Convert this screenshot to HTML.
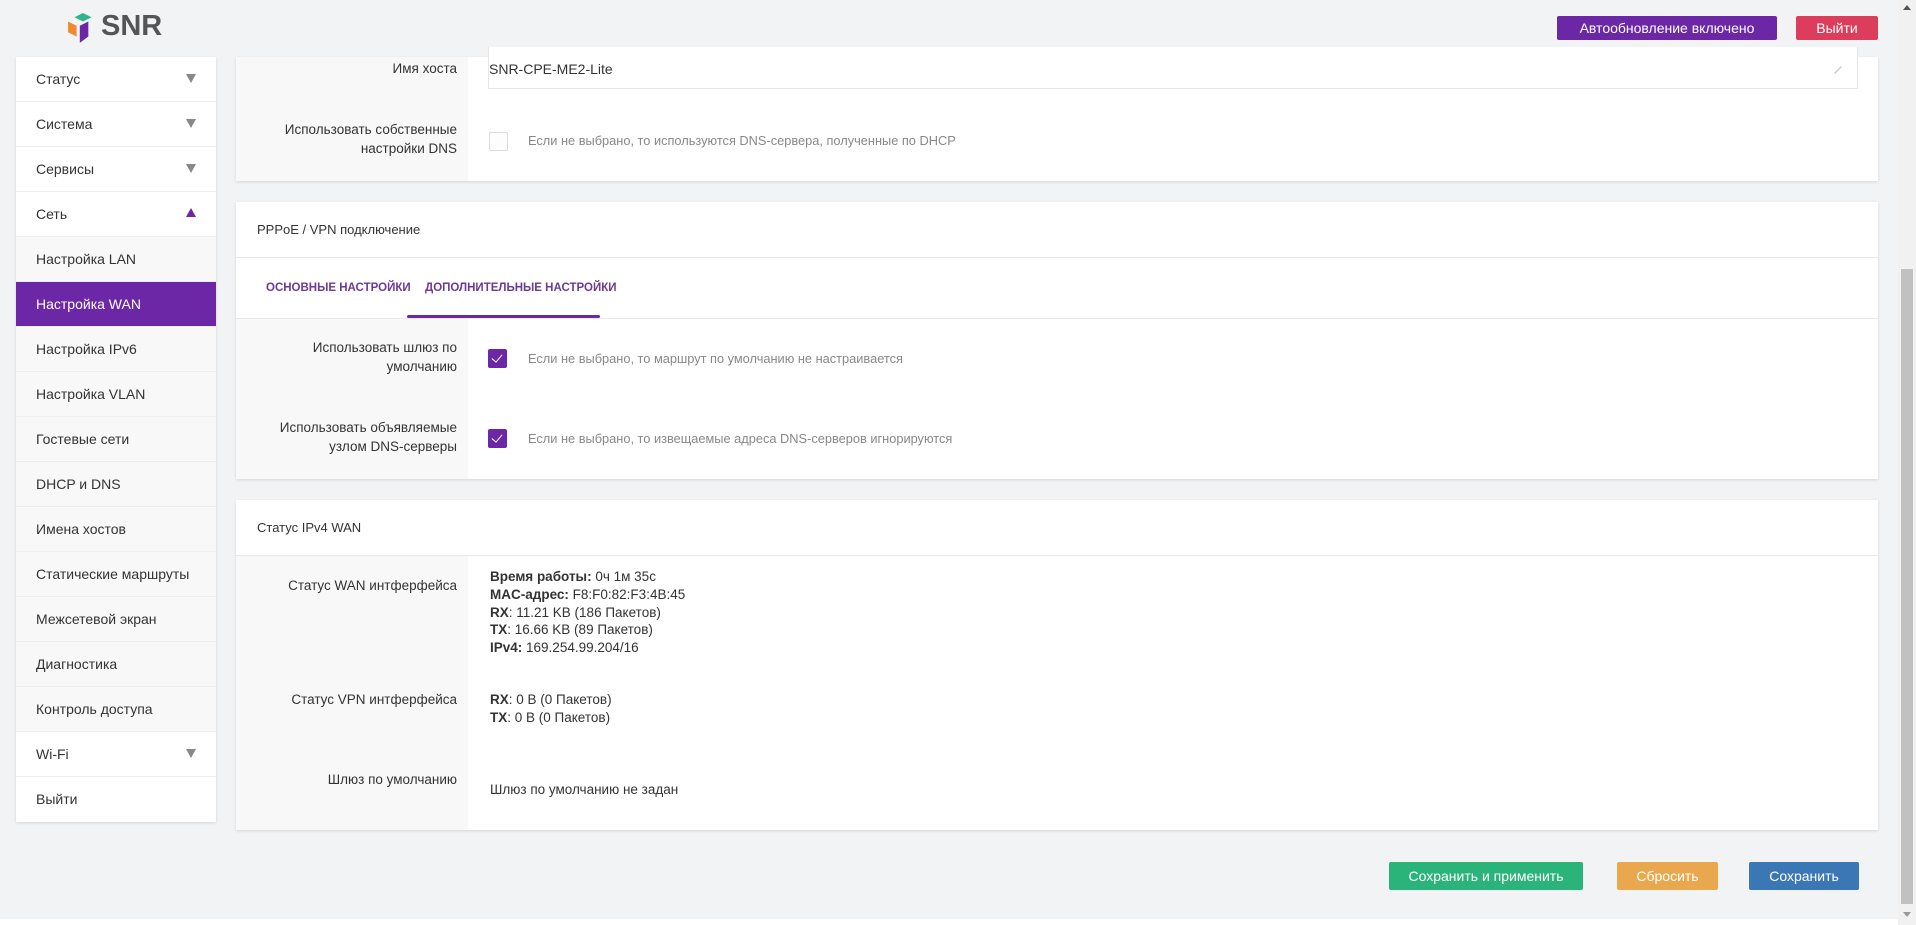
<!DOCTYPE html>
<html><head><meta charset="utf-8"><style>
*{box-sizing:border-box;margin:0;padding:0}
body{width:1916px;height:925px;background:#fff;font-family:"Liberation Sans",sans-serif;color:#333;position:relative;overflow:hidden}
.bg{position:absolute;left:0;top:0;width:1898px;height:919px;background:#f2f3f5}
.a{position:absolute}
.side{position:absolute;left:16px;top:57px;width:200px;background:#fff;box-shadow:0 1px 3px rgba(0,0,0,.12)}
.side div{height:45px;line-height:45px;padding-left:20px;font-size:14px;color:#333;border-bottom:1px solid #eceef0;position:relative;background:#f8f8f8}
.side div.w{background:#fff}
.side div.act{background:#6b27a6;color:#fff}
.tri{position:absolute;right:20px;top:17px;width:0;height:0;border-left:5px solid transparent;border-right:5px solid transparent;border-top:9px solid #888}
.up{border-top:none;border-bottom:9px solid #6b27a6;top:16px}
.card{position:absolute;left:236px;width:1642px;background:#fff;box-shadow:0 1px 3px rgba(0,0,0,.12)}
.lab{position:absolute;left:0;width:232px;background:#f8f8f8}
.lt{position:absolute;right:1421px;text-align:right;font-size:13.5px;line-height:19px;color:#333}
.hd{position:absolute;left:21px;font-size:13px;color:#333}
.hr{position:absolute;left:0;width:1642px;height:1px;background:#e8e9eb}
.cb{position:absolute;width:19px;height:19px;border-radius:2px;background:#6b27a6}
.cb:after{content:"";position:absolute;left:6px;top:3px;width:5px;height:9px;border-right:1.5px solid #fff;border-bottom:1.5px solid #fff;transform:rotate(40deg)}
.help{position:absolute;font-size:12.8px;color:#888}
.v{font-size:13.5px;line-height:17.8px;color:#333}
.btn{position:absolute;color:#fff;font-size:14px;text-align:center;border-radius:2px}
</style></head><body>
<div class="bg"></div>
<!-- logo -->
<svg class="a" style="left:68px;top:13px" width="30" height="32" viewBox="0 0 28 30">
<polygon points="14,0 22,4 14,8 6,4" fill="#2fb58b"/>
<polygon points="0,8 8,12 8,22 0,18" fill="#f08a2e"/>
<polygon points="11,12 19,8 19,22 11,28" fill="#6b27a6"/>
</svg>
<div class="a" style="left:101px;top:10px;font-size:29px;font-weight:bold;color:#555">SNR</div>
<div class="btn" style="left:1557px;top:16px;width:220px;height:24px;line-height:24px;background:#6b27a6">Автообновление включено</div>
<div class="btn" style="left:1796px;top:16px;width:82px;height:24px;line-height:24px;background:#dc3d5d">Выйти</div>
<!-- scrollbar -->
<div class="a" style="left:1898px;top:0;width:18px;height:925px;background:#f1f1f1"></div>
<div class="a" style="left:1901px;top:269px;width:12px;height:635px;background:#c1c1c1"></div>
<div class="a" style="left:1903px;top:5px;border-left:4px solid transparent;border-right:4px solid transparent;border-bottom:5px solid #555"></div>
<div class="a" style="left:1903px;top:912px;border-left:4px solid transparent;border-right:4px solid transparent;border-top:5px solid #999"></div>
<!-- sidebar -->
<div class="side">
<div class="w">Статус<span class="tri"></span></div>
<div class="w">Система<span class="tri"></span></div>
<div class="w">Сервисы<span class="tri"></span></div>
<div class="w">Сеть<span class="tri up"></span></div>
<div>Настройка LAN</div>
<div class="act">Настройка WAN</div>
<div>Настройка IPv6</div>
<div>Настройка VLAN</div>
<div>Гостевые сети</div>
<div>DHCP и DNS</div>
<div>Имена хостов</div>
<div>Статические маршруты</div>
<div>Межсетевой экран</div>
<div>Диагностика</div>
<div>Контроль доступа</div>
<div class="w">Wi-Fi<span class="tri"></span></div>
<div class="w" style="border-bottom:none">Выйти</div>
</div>
<!-- card1 -->
<div class="card" style="top:57px;height:124px">
<div class="lab" style="top:0;height:124px"></div>
<div class="lt" style="top:2px">Имя хоста</div>
<div class="a" style="left:252px;top:-10px;width:1370px;height:42px;border:1px solid #e6e6e6;border-top:none;background:#fff"></div>
<div class="a v" style="left:253px;top:4px;font-size:14px">SNR-CPE-ME2-Lite</div>
<svg class="a" style="left:1596px;top:6px" width="12" height="12" viewBox="0 0 12 12"><path d="M2 10 L9 3 L10 4 L3 11 Z" fill="#ccc"/></svg>
<div class="lt" style="top:63px">Использовать собственные<br>настройки DNS</div>
<div class="a" style="left:253px;top:75px;width:19px;height:19px;border:1px solid #ddd;border-radius:2px;background:#fdfdfd"></div>
<div class="help" style="left:292px;top:76px">Если не выбрано, то используются DNS-сервера, полученные по DHCP</div>
</div>
<!-- card2 -->
<div class="card" style="top:202px;height:277px">
<div class="hd" style="top:20px">PPPoE / VPN подключение</div>
<div class="hr" style="top:55px"></div>
<div class="a" style="left:30px;top:80px;font-size:11.5px;font-weight:bold;color:#6b3a95">ОСНОВНЫЕ НАСТРОЙКИ</div>
<div class="a" style="left:189px;top:80px;font-size:11.5px;font-weight:bold;color:#6b3a95">ДОПОЛНИТЕЛЬНЫЕ НАСТРОЙКИ</div>
<div class="a" style="left:171px;top:113px;width:193px;height:3px;background:#6b27a6;border-radius:2px"></div>
<div class="hr" style="top:116px"></div>
<div class="lab" style="top:117px;height:160px"></div>
<div class="lt" style="top:136px">Использовать шлюз по<br>умолчанию</div>
<div class="cb" style="left:252px;top:147px"></div>
<div class="help" style="left:292px;top:149px">Если не выбрано, то маршрут по умолчанию не настраивается</div>
<div class="lt" style="top:216px">Использовать объявляемые<br>узлом DNS-серверы</div>
<div class="cb" style="left:252px;top:227px"></div>
<div class="help" style="left:292px;top:229px">Если не выбрано, то извещаемые адреса DNS-серверов игнорируются</div>
</div>
<!-- card3 -->
<div class="card" style="top:500px;height:330px">
<div class="hd" style="top:20px">Статус IPv4 WAN</div>
<div class="hr" style="top:55px"></div>
<div class="lab" style="top:56px;height:274px"></div>
<div class="lt" style="top:76px">Статус WAN интферфейса</div>
<div class="a v" style="left:254px;top:68px"><b>Время работы:</b> 0ч 1м 35с<br><b>MAC-адрес:</b> F8:F0:82:F3:4B:45<br><b>RX</b>: 11.21 KB (186 Пакетов)<br><b>TX</b>: 16.66 KB (89 Пакетов)<br><b>IPv4:</b> 169.254.99.204/16</div>
<div class="lt" style="top:190px">Статус VPN интферфейса</div>
<div class="a v" style="left:254px;top:191px"><b>RX</b>: 0 B (0 Пакетов)<br><b>TX</b>: 0 B (0 Пакетов)</div>
<div class="lt" style="top:270px">Шлюз по умолчанию</div>
<div class="a v" style="left:254px;top:281px">Шлюз по умолчанию не задан</div>
</div>
<!-- buttons -->
<div class="btn" style="left:1389px;top:862px;width:194px;height:28px;line-height:28px;background:#2bb47a">Сохранить и применить</div>
<div class="btn" style="left:1617px;top:862px;width:101px;height:28px;line-height:28px;background:#eaa84e">Сбросить</div>
<div class="btn" style="left:1749px;top:862px;width:110px;height:28px;line-height:28px;background:#3b77b5">Сохранить</div>
</body></html>
